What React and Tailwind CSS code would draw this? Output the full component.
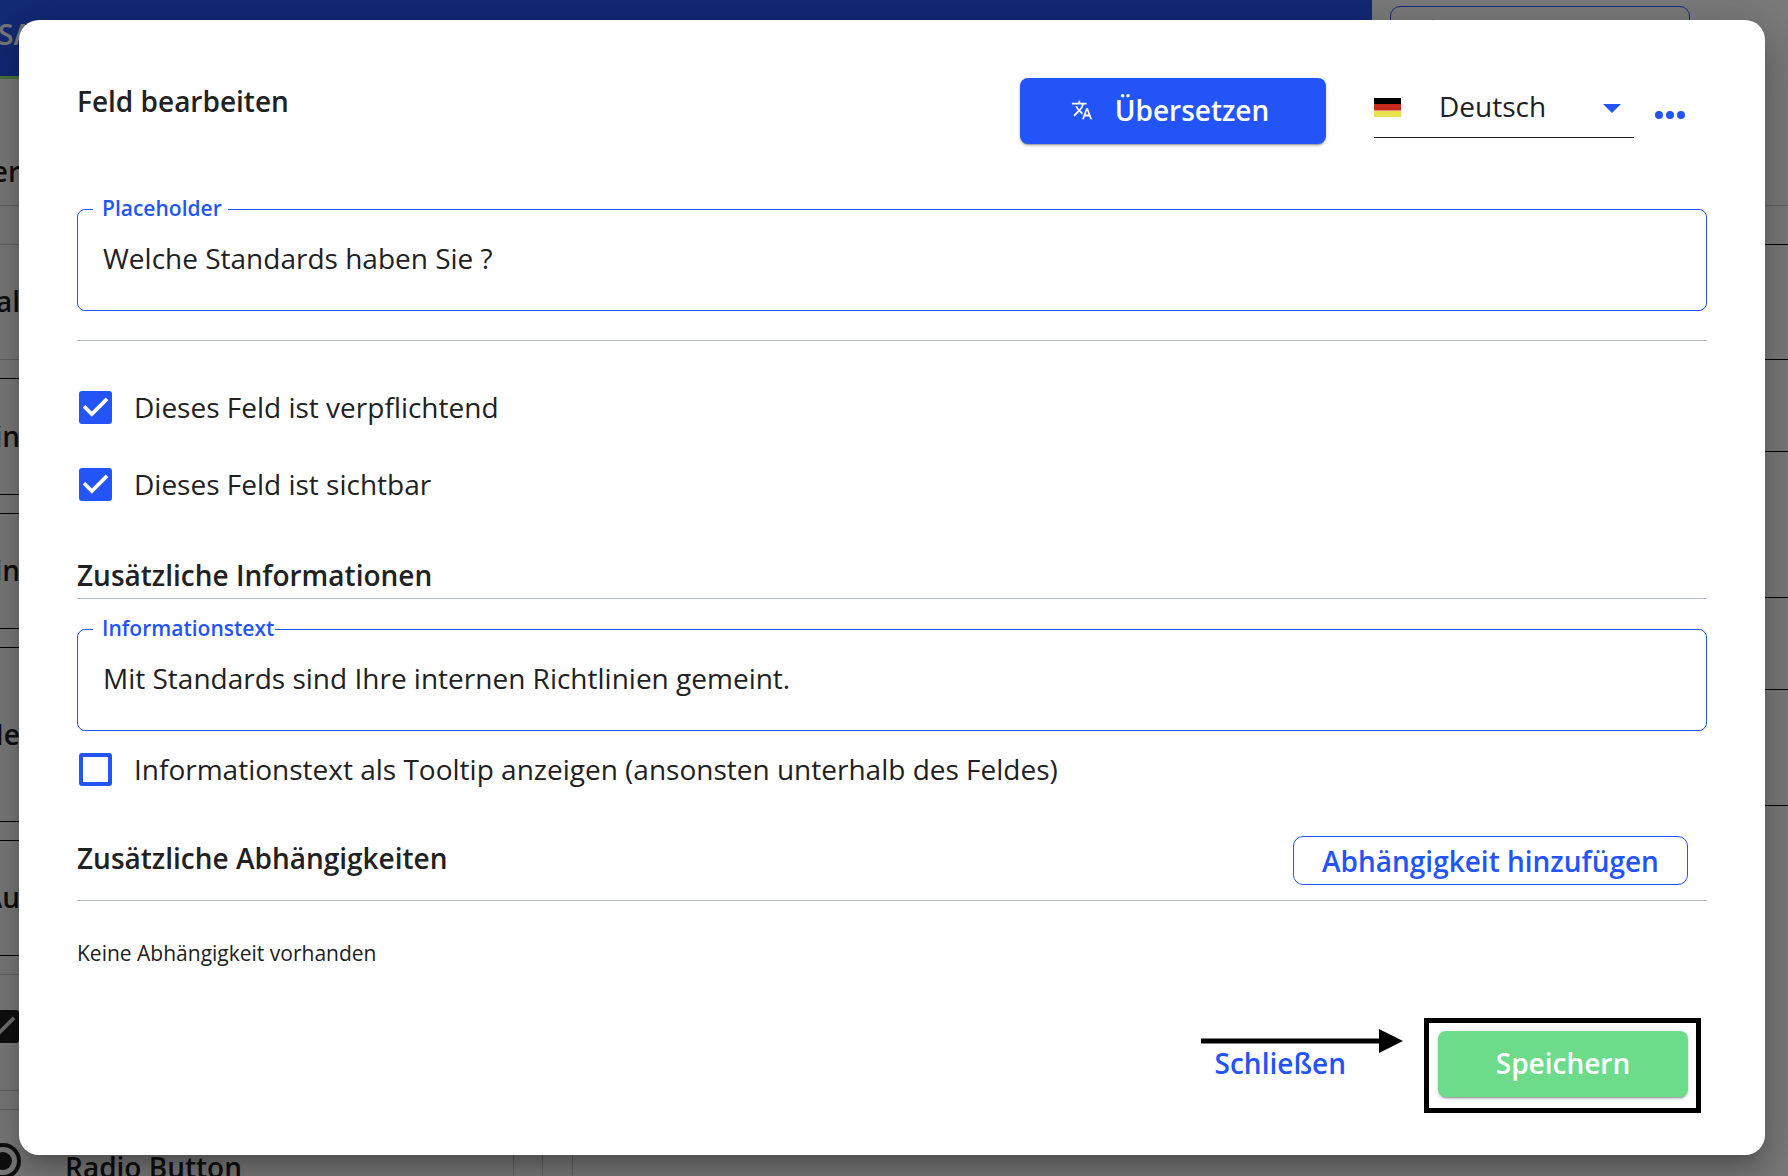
import React, { useState } from "react";
import { MdTranslate, MdOutlineCloudUpload } from "react-icons/md";

const fieldCards = [
  { id: 1, title: "al", size: "h-[116px]", border: "border-[#c4c4c4]" },
  { id: 2, title: "in", size: "h-[117px]", border: "border-black" },
  { id: 3, title: "in", size: "h-[116px]", border: "border-black" },
  { id: 4, title: "Me", size: "h-[175px]", border: "border-black" },
  { id: 5, title: "Au", size: "h-[116px]", border: "border-black" },
];

const CheckMark = ({ className }) => (
  <svg viewBox="3 3 18 18" className={className} aria-hidden="true">
    <path d="M10 17l-5-5 1.41-1.41L10 14.17l7.59-7.59L19 8l-9 9z" fill="currentColor" />
  </svg>
);

const RadioIcon = () => (
  <svg viewBox="0 0 36 36" className="size-9 shrink-0" aria-hidden="true">
    <circle cx="18" cy="18" r="16" fill="none" stroke="#1f1f1f" strokeWidth="4" />
    <circle cx="18" cy="18" r="9" fill="#1f1f1f" />
  </svg>
);

// Form builder that lies behind the dialog
const Background = () => {
  return (
    <div className="flex h-screen flex-col bg-[#f5f5f5] text-[#1f1f1f]" aria-hidden="true">
      <div className="flex h-[79px] shrink-0">
        <div className="h-full w-[1372px] border-b-3 border-[#9be47f] bg-[#2453e8]">
          <div className="flex w-8 justify-end pt-3 text-[28px] leading-11 font-semibold text-[#f0f0f0]">SA</div>
        </div>
        <div className="flex-1 pt-1.5 pl-[18px]">
          <div className="h-16 w-[300px] rounded-[10px] border border-[#2354f7] pt-2 pl-7 text-[#2354f7]">
            <MdOutlineCloudUpload className="size-7" />
          </div>
        </div>
      </div>

      <div className="flex h-[127px] shrink-0 items-end border-b border-[#c4c4c4] pb-3">
        <div className="flex w-5 justify-end text-[28px] leading-11 font-semibold">er</div>
      </div>

      <div className="flex flex-1 overflow-hidden">
        {/* Field types */}
        <div className="flex w-[543px] shrink-0 flex-col gap-[18px] border-r border-[#c4c4c4] pt-[38px] pr-7">
          {fieldCards.map((card) => (
            <div key={card.id} className={`flex shrink-0 items-center border-y pb-0.5 ${card.size} ${card.border}`}>
              <div className="flex w-5 justify-end text-[28px] leading-11 font-semibold">{card.title}</div>
            </div>
          ))}
          <div className="flex h-[117px] shrink-0 items-center border-y border-r border-[#c4c4c4] pb-3">
            <div className="flex w-[19px] justify-end">
              <CheckMark className="size-[33px] shrink-0 rounded-[3px] bg-[#1f1f1f] text-[#e0e0e0]" />
            </div>
          </div>
          <div className="flex h-[117px] shrink-0 items-center gap-11 border-y border-r border-[#c4c4c4] pb-3.5">
            <div className="flex w-[21px] justify-end">
              <RadioIcon />
            </div>
            <div className="pt-3 text-[28px] leading-11 font-semibold">Radio Button</div>
          </div>
        </div>

        {/* Form preview */}
        <div className="ml-[29px] flex flex-1 flex-col gap-[91px] border-l border-[#c4c4c4] pt-[38px]">
          <div className="h-[116px] shrink-0 border-y border-black"></div>
          <div className="h-[147px] shrink-0 border-y border-black"></div>
          <div className="h-[117px] shrink-0 border-y border-black"></div>
        </div>
      </div>
    </div>
  );
};

const TextField = ({ id, label, labelClass, value, onChange }) => {
  return (
    <div className="relative h-[102px] rounded-lg border border-[#2354f7]">
      <label
        htmlFor={id}
        className={`absolute -top-[18px] left-[15px] bg-white pl-[9px] text-[21px] leading-8 font-semibold text-[#2354f7] ${labelClass}`}
      >
        {label}
      </label>
      <input
        id={id}
        type="text"
        value={value}
        onChange={(e) => onChange(e.target.value)}
        className="h-full w-full rounded-lg bg-transparent px-[25px] pb-1 text-[28px] outline-none"
      />
    </div>
  );
};

const Checkbox = ({ id, label, defaultChecked }) => {
  return (
    <div className="flex h-[77px] items-center pl-0.5">
      <div className="grid size-[33px] shrink-0">
        <input
          id={id}
          type="checkbox"
          defaultChecked={defaultChecked}
          className="peer col-start-1 row-start-1 size-[33px] appearance-none rounded-[3px] border-4 border-[#2354f7] checked:bg-[#2354f7]"
        />
        <CheckMark className="pointer-events-none invisible col-start-1 row-start-1 size-[33px] text-white peer-checked:visible" />
      </div>
      <label htmlFor={id} className="pb-0.5 pl-[22px] text-[28px] leading-11">
        {label}
      </label>
    </div>
  );
};

const LanguageSelect = () => {
  return (
    <div className="relative w-[260px]">
      <svg viewBox="0 0 27 19" className="pointer-events-none absolute top-5 left-0 h-[19px] w-[27px]" aria-hidden="true">
        <rect width="27" height="19" fill="#e9e24d" />
        <rect width="27" height="13" fill="#dd8a80" />
        <rect width="27" height="12" fill="#c92a1e" />
        <rect width="27" height="6" fill="#000" />
      </svg>
      <select
        aria-label="Sprache"
        className="h-[60px] w-full appearance-none border-b border-[#1f1f1f] bg-transparent pb-1 pl-[65px] text-[28px] outline-none"
      >
        <option>Deutsch</option>
      </select>
      <svg viewBox="0 0 18 9" className="pointer-events-none absolute top-[26px] right-[13px] h-[9px] w-[18px]" aria-hidden="true">
        <path d="M0 0h18L9 9z" fill="#2354f7" />
      </svg>
    </div>
  );
};

const EditFieldDialog = () => {
  const [placeholder, setPlaceholder] = useState("Welche Standards haben Sie ?");
  const [info, setInfo] = useState("Mit Standards sind Ihre internen Richtlinien gemeint.");

  return (
    <div
      role="dialog"
      aria-labelledby="dialog-title"
      className="w-full rounded-[20px] bg-white p-[58px] text-[#212121] shadow-[0_11px_15px_-7px_rgba(0,0,0,0.2),0_24px_38px_3px_rgba(0,0,0,0.14),0_9px_46px_8px_rgba(0,0,0,0.12)]"
    >
      {/* Header */}
      <div className="flex items-start">
        <h1 id="dialog-title" className="flex-1 pt-px text-[28px] leading-11 font-semibold">
          Feld bearbeiten
        </h1>
        <button className="mr-12 flex h-[66px] w-[306px] items-center justify-center gap-[22px] rounded-lg bg-[#2354f7] pr-1.5 pb-0.5 text-[28px] font-semibold text-white shadow-[0_3px_1px_-2px_rgba(0,0,0,0.2),0_2px_2px_0_rgba(0,0,0,0.14),0_1px_5px_0_rgba(0,0,0,0.12)]">
          <MdTranslate className="size-[22px]" />
          Übersetzen
        </button>
        <LanguageSelect />
        <button aria-label="Mehr" className="flex size-[73px] items-center justify-center gap-[3px] pr-0.5">
          <span className="size-2 rounded-full bg-[#2354f7]"></span>
          <span className="size-2 rounded-full bg-[#2354f7]"></span>
          <span className="size-2 rounded-full bg-[#2354f7]"></span>
        </button>
      </div>

      <div className="mt-[58px]">
        <TextField id="placeholder" label="Placeholder" labelClass="pr-1.5" value={placeholder} onChange={setPlaceholder} />
      </div>
      <hr className="mt-[29px] mb-7 border-[#b9bccb]" />

      <Checkbox id="required" label="Dieses Feld ist verpflichtend" defaultChecked />
      <Checkbox id="visible" label="Dieses Feld ist sichtbar" defaultChecked />

      {/* Additional information */}
      <h2 className="mt-7 mb-[30px] border-b border-[#b9bccb] pt-0.5 pb-px text-[28px] leading-11 font-semibold">
        Zusätzliche Informationen
      </h2>
      <TextField id="info" label="Informationstext" labelClass="pr-px" value={info} onChange={setInfo} />
      <Checkbox id="tooltip" label="Informationstext als Tooltip anzeigen (ansonsten unterhalb des Feldes)" />

      {/* Dependencies */}
      <div className="mt-7 flex items-start justify-between border-b border-[#b9bccb] pr-[19px] pb-[15px]">
        <h2 className="text-[28px] leading-11 font-semibold">Zusätzliche Abhängigkeiten</h2>
        <button className="flex h-[49px] w-[395px] items-center justify-center rounded-[10px] border border-[#2354f7] text-[28px] font-semibold text-[#2354f7]">
          Abhängigkeit hinzufügen
        </button>
      </div>
      <p className="mt-9 text-[21px] leading-8">Keine Abhängigkeit vorhanden</p>

      {/* Footer */}
      <div className="mt-[62px] flex justify-end gap-[78px] pr-[19px]">
        <div className="relative">
          <button className="h-[66px] px-3.5 pb-0.5 text-[28px] font-semibold text-[#2354f7]">Schließen</button>
          <svg viewBox="0 0 202 24" className="absolute -top-0.5 left-0 h-6 w-[202px] max-w-none" aria-hidden="true">
            <path d="M0 9.500h178V0l24 12-24 12v-9.500H0z" fill="#000" />
          </svg>
        </div>
        <div className="relative">
          <button className="h-[66px] w-[250px] rounded-lg bg-[#6ddc8a] pb-0.5 text-[28px] font-semibold text-white shadow-[0_3px_1px_-2px_rgba(0,0,0,0.2),0_2px_2px_0_rgba(0,0,0,0.14),0_1px_5px_0_rgba(0,0,0,0.12)]">
            Speichern
          </button>
          <div className="pointer-events-none absolute -top-[13px] -right-[13px] -bottom-4 -left-3.5 border-5 border-black"></div>
        </div>
      </div>
    </div>
  );
};

export default function App() {
  return (
    <div className="relative h-screen overflow-hidden font-['Open_Sans',sans-serif]">
      <Background />
      <div className="absolute inset-0 flex items-start bg-black/50 pt-5 pr-[23px] pl-[19px]">
        <EditFieldDialog />
      </div>
    </div>
  );
}
